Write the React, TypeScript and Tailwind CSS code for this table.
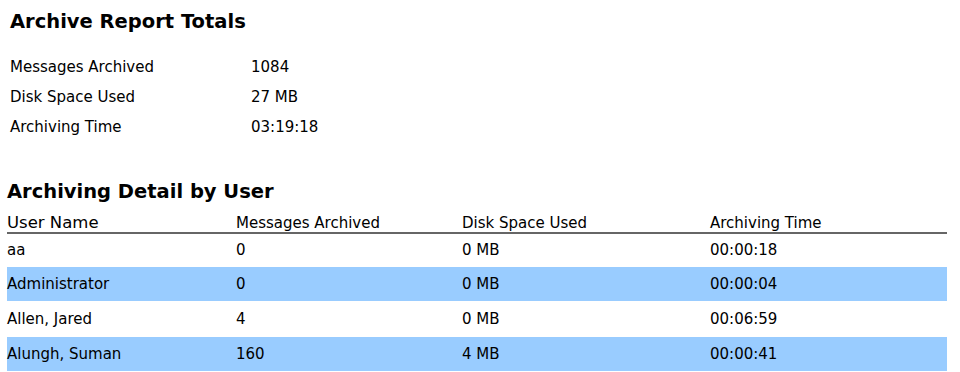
import React from 'react';

const totals = [
  { label: 'Messages Archived', value: '1084' },
  { label: 'Disk Space Used', value: '27 MB' },
  { label: 'Archiving Time', value: '03:19:18' },
];

const users = [
  { name: 'aa', messages: '0', disk: '0 MB', time: '00:00:18' },
  { name: 'Administrator', messages: '0', disk: '0 MB', time: '00:00:04' },
  { name: 'Allen, Jared', messages: '4', disk: '0 MB', time: '00:06:59' },
  { name: 'Alungh, Suman', messages: '160', disk: '4 MB', time: '00:00:41' },
];

export default function App() {
  return (
    <div className="w-[960px] h-[372px] overflow-hidden bg-white text-black font-['DejaVu_Sans',sans-serif]">
      {/* Totals */}
      <div className="pl-[10px] pt-[10px]">
        <h1 className="text-[19.5px] leading-[24px] font-bold">Archive Report Totals</h1>
        <div className="mt-[18px] grid grid-cols-[241px_auto] text-[15px] leading-[30px]">
          {totals.map((t) => (
            <React.Fragment key={t.label}>
              <div>{t.label}</div>
              <div>{t.value}</div>
            </React.Fragment>
          ))}
        </div>
      </div>

      {/* Detail by user */}
      <div className="pl-[7px] mt-[38px]">
        <h2 className="text-[19.5px] leading-[24px] font-bold">Archiving Detail by User</h2>
        <div className="w-[940px]">
          <div className="grid grid-cols-[229px_226px_248px_237px] items-end h-[30px] border-b-2 border-[#666666]">
            <div className="text-[16.5px] leading-[19px]">User Name</div>
            <div className="text-[15px] leading-[18px]">Messages Archived</div>
            <div className="text-[15px] leading-[18px]">Disk Space Used</div>
            <div className="text-[15px] leading-[18px]">Archiving Time</div>
          </div>
          <div className="flex flex-col gap-[1px] text-[15px]">
            {users.map((u, i) => (
              <div
                key={u.name}
                className={`grid grid-cols-[229px_226px_248px_237px] items-center ${i === 0 ? 'h-[32px]' : 'h-[34px]'} ${i % 2 === 1 ? 'bg-[#99ccff]' : 'bg-white'}`}
              >
                <div>{u.name}</div>
                <div>{u.messages}</div>
                <div>{u.disk}</div>
                <div>{u.time}</div>
              </div>
            ))}
          </div>
        </div>
      </div>
    </div>
  );
}
